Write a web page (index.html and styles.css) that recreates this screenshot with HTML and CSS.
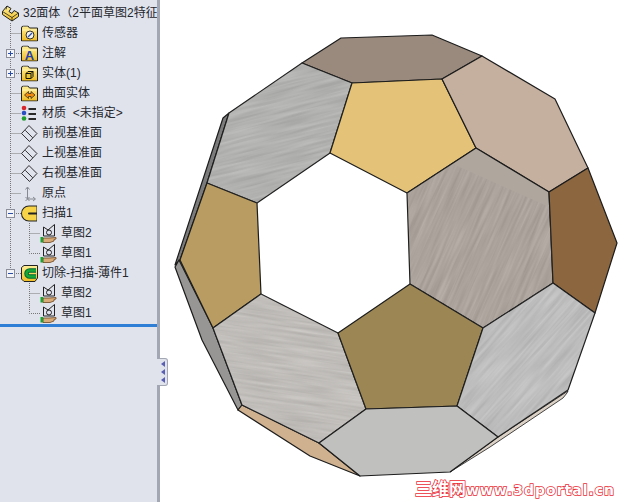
FILE: index.html
```html
<!DOCTYPE html>
<html lang="en">
<head>
    <meta charset="UTF-8">
    <meta name="viewport" content="width=device-width, initial-scale=1.0">
    <title>32面体</title>
    <link rel="stylesheet" href="styles.css">
</head>
<body>

<svg class="defs" width="0" height="0">
    <defs>
        <!-- tree connectors -->
        <symbol id="tee" viewBox="0 0 21 20"><path class="dots" d="M10.5 0V20M10.5 10.5H21"/></symbol>
        <symbol id="tee-plus" viewBox="0 0 21 20"><path class="dots" d="M10.5 0V20M14 10.5H21"/><rect class="box" x="6.5" y="6.5" width="8" height="8"/><path class="sign" d="M8 10.5H13M10.5 8V13"/></symbol>
        <symbol id="tee-minus" viewBox="0 0 21 20"><path class="dots" d="M10.5 0V20M14 10.5H21"/><rect class="box" x="6.5" y="6.5" width="8" height="8"/><path class="sign" d="M8 10.5H13"/></symbol>
        <symbol id="last-minus" viewBox="0 0 21 20"><path class="dots" d="M10.5 0V6M14 10.5H21"/><rect class="box" x="6.5" y="6.5" width="8" height="8"/><path class="sign" d="M8 10.5H13"/></symbol>
        <symbol id="sub-tee" viewBox="0 0 40 20"><path class="dots" d="M10.5 0V20M29.5 0V20M29.5 10.5H40"/></symbol>
        <symbol id="sub-last" viewBox="0 0 40 20"><path class="dots" d="M10.5 0V20M29.5 0V10.5H40"/></symbol>
        <symbol id="end-tee" viewBox="0 0 40 20"><path class="dots" d="M29.5 0V20M29.5 10.5H40"/></symbol>
        <symbol id="end-last" viewBox="0 0 40 20"><path class="dots" d="M29.5 0V10.5H40"/></symbol>

        <!-- feature icons -->
        <linearGradient id="gold" x1="0" y1="0" x2="0" y2="1">
            <stop offset="0" stop-color="#fff09a"/>
            <stop offset="1" stop-color="#f0bc20"/>
        </linearGradient>
        <symbol id="part" viewBox="0 0 17 16">
            <path class="ink gold" d="M0.500 6L5 0.500L9 3L7 6L10 8L12 5L16.500 7.500V11L10 15.500L0.500 9Z"/>
            <path class="thin" d="M0.500 6L10 12V15.500M10 12L16.500 7.500M5 0.500L4 4"/>
        </symbol>
        <symbol id="folder" viewBox="0 0 17 16">
            <path class="ink gold" d="M0.500 15.500V2.500Q0.500 0.500 2.500 0.500H7L8.500 2.500H16.500V15.500Z"/>
            <path class="edge" d="M1.500 4.500H15.500"/>
        </symbol>
        <symbol id="plane" viewBox="0 0 16 16">
            <path class="plane" d="M0.500 8L7.500 0.500L15 8L8 15.500Z"/>
            <path class="plane" d="M4 5L11 12"/>
        </symbol>
        <symbol id="sketch" viewBox="0 0 17 19">
            <path class="outline" d="M3.500 3L8 6L14.500 0.500V12H3.500Z"/>
            <circle class="outline" cx="9" cy="8.500" r="2.500"/>
            <path class="hand" d="M3 14H9L16 13.500V15L14 15.500V17L10 18.500H3Z"/>
            <rect class="green" x="0.500" y="13" width="2.500" height="5.500"/>
        </symbol>
        <symbol id="sweep" viewBox="0 0 17 17">
            <path class="c-ink" d="M16 4.500H8A4 4 0 0 0 8 12.500H16"/>
            <path class="c-gold" d="M15.500 4.500H8A4 4 0 0 0 8 12.500H15.500"/>
        </symbol>

        <!-- brushed metal, used as a fill on top of the flat faces -->
        <filter id="brush" x="0" y="0" width="100%" height="100%" color-interpolation-filters="sRGB">
            <feTurbulence type="fractalNoise" baseFrequency="0.02 0.35" numOctaves="2" seed="4"/>
            <feColorMatrix type="matrix" values="1.600 0 0 0 -0.300  1.600 0 0 0 -0.300  1.600 0 0 0 -0.300  0 0 0 0 0.09"/>
        </filter>
        <pattern id="brush-flat" patternUnits="userSpaceOnUse" x="-400" y="-400" width="1300" height="1300" patternTransform="rotate(-14 400 250)">
            <rect x="-400" y="-400" width="1300" height="1300" filter="url(#brush)"/>
        </pattern>
        <pattern id="brush-low" patternUnits="userSpaceOnUse" x="-400" y="-400" width="1300" height="1300" patternTransform="rotate(8 400 250)">
            <rect x="-400" y="-400" width="1300" height="1300" filter="url(#brush)"/>
        </pattern>
        <pattern id="brush-steep" patternUnits="userSpaceOnUse" x="-400" y="-400" width="1300" height="1300" patternTransform="rotate(-66 400 250)">
            <rect x="-400" y="-400" width="1300" height="1300" filter="url(#brush)"/>
        </pattern>
        <pattern id="brush-mid" patternUnits="userSpaceOnUse" x="-400" y="-400" width="1300" height="1300" patternTransform="rotate(-48 400 250)">
            <rect x="-400" y="-400" width="1300" height="1300" filter="url(#brush)"/>
        </pattern>
    </defs>
</svg>

<div class="app">

    <div class="sidebar">
        <div class="row root">
            <svg class="icon"><use href="#part"/></svg>
            <span class="label">32面体（2平面草图2特征</span>
        </div>

        <div class="row">
            <svg class="twig"><use href="#tee"/></svg>
            <svg class="icon" viewBox="0 0 17 16">
                <use href="#folder"/>
                <circle class="dial" cx="9" cy="9.500" r="4"/>
                <path class="needle" d="M7 11.500L11 7.500"/>
            </svg>
            <span class="label">传感器</span>
        </div>
        <div class="row">
            <svg class="twig"><use href="#tee-plus"/></svg>
            <svg class="icon" viewBox="0 0 17 16">
                <use href="#folder"/>
                <text class="letter" x="8.500" y="14.500" text-anchor="middle">A</text>
            </svg>
            <span class="label">注解</span>
        </div>
        <div class="row">
            <svg class="twig"><use href="#tee-plus"/></svg>
            <svg class="icon" viewBox="0 0 17 16">
                <use href="#folder"/>
                <path class="solid" d="M5 8L7 6H12V11L10 13H5Z"/>
                <path class="solid" d="M5 8H10V13M10 8L12 6"/>
            </svg>
            <span class="label">实体(1)</span>
        </div>
        <div class="row">
            <svg class="twig"><use href="#tee"/></svg>
            <svg class="icon" viewBox="0 0 17 16">
                <use href="#folder"/>
                <path class="surface" d="M3.500 9.500L7.500 6V8H10V6L14 9.500L10 13V11H7.500V13Z"/>
            </svg>
            <span class="label">曲面实体</span>
        </div>
        <div class="row">
            <svg class="twig"><use href="#tee"/></svg>
            <svg class="icon" viewBox="0 0 17 16">
                <circle class="ball red" cx="3" cy="2.500" r="2.300"/>
                <circle class="ball blue" cx="3" cy="7.500" r="2.300"/>
                <circle class="ball grn" cx="3" cy="13" r="2.300"/>
                <path class="bars" d="M7.500 3.500H15M7.500 8.500H15M7.500 13.500H15"/>
            </svg>
            <span class="label">材质&nbsp;&nbsp;&lt;未指定&gt;</span>
        </div>
        <div class="row">
            <svg class="twig"><use href="#tee"/></svg>
            <svg class="icon"><use href="#plane"/></svg>
            <span class="label">前视基准面</span>
        </div>
        <div class="row">
            <svg class="twig"><use href="#tee"/></svg>
            <svg class="icon"><use href="#plane"/></svg>
            <span class="label">上视基准面</span>
        </div>
        <div class="row">
            <svg class="twig"><use href="#tee"/></svg>
            <svg class="icon"><use href="#plane"/></svg>
            <span class="label">右视基准面</span>
        </div>
        <div class="row">
            <svg class="twig"><use href="#tee"/></svg>
            <svg class="icon" viewBox="0 0 17 16">
                <path class="axis" d="M6.500 2V13.500H14M4.500 4L6.500 1.500L8.500 4M12 11.500L14.500 13.500L12 15.500M4.500 11.500L8.500 15.500M8.500 11.500L4.500 15.500"/>
            </svg>
            <span class="label">原点</span>
        </div>
        <div class="row">
            <svg class="twig"><use href="#tee-minus"/></svg>
            <svg class="icon"><use href="#sweep"/></svg>
            <span class="label">扫描1</span>
        </div>
        <div class="row">
            <svg class="twig wide"><use href="#sub-tee"/></svg>
            <svg class="icon tall"><use href="#sketch"/></svg>
            <span class="label">草图2</span>
        </div>
        <div class="row">
            <svg class="twig wide"><use href="#sub-last"/></svg>
            <svg class="icon tall"><use href="#sketch"/></svg>
            <span class="label">草图1</span>
        </div>
        <div class="row">
            <svg class="twig"><use href="#last-minus"/></svg>
            <svg class="icon" viewBox="0 0 17 17">
                <path class="ink gold" d="M0.500 2.500L3 0.500H16.500V13L14 16.500H3L0.500 14Z"/>
                <path class="cut-ink" d="M15 5.500H8.500A3 3 0 0 0 8.500 11.500H15"/>
                <path class="cut-green" d="M15 5.500H8.500A3 3 0 0 0 8.500 11.500H15"/>
            </svg>
            <span class="label">切除-扫描-薄件1</span>
        </div>
        <div class="row">
            <svg class="twig wide"><use href="#end-tee"/></svg>
            <svg class="icon tall"><use href="#sketch"/></svg>
            <span class="label">草图2</span>
        </div>
        <div class="row">
            <svg class="twig wide"><use href="#end-last"/></svg>
            <svg class="icon tall"><use href="#sketch"/></svg>
            <span class="label">草图1</span>
        </div>

        <div class="rule"></div>
    </div>

    <div class="collapse">
        <span class="arrow"></span>
        <span class="arrow"></span>
        <span class="arrow"></span>
    </div>

    <div class="view">
        <svg class="model" viewBox="160 0 475 502" width="475" height="502">
            <!-- thin side walls behind the faces -->
            <polygon class="face wall-dark" points="229,113 223,118 175,265 180,260 207,183"/>
            <polygon class="face wall-grey" points="175,267 179,260 213,328 242,405 238,410 202,340"/>
            <polygon class="face wall-tan" points="242,405 319,443 360,476 310,456 238,410"/>
            <polygon class="face wall-light" points="450,472 498,437 568,391 567,393 563,398 490,447"/>

            <polygon class="face c-top" points="341,38 432,35 482,56 442,79 352,83 302,63"/>
            <polygon class="face c-grey" points="302,63 352,83 330,153 257,203 207,183 229,113"/>
            <polygon class="face c-yellow" points="352,83 442,79 476,148 407,193 330,153"/>
            <polygon class="face c-beige" points="482,56 555,99 588,168 549,192 476,148 442,79"/>
            <polygon class="face c-centre" points="476,148 549,192 553,283 483,328 410,284 407,193"/>
            <polygon class="face c-brown" points="588,168 617,243 595,313 553,283 549,192"/>
            <polygon class="face c-tan" points="207,183 257,203 261,294 213,328 180,260"/>
            <polygon class="face c-pale" points="213,328 261,294 338,333 366,409 319,443 242,405"/>
            <polygon class="face c-olive" points="338,333 410,284 483,328 457,406 366,409"/>
            <polygon class="face c-silver" points="483,328 553,283 595,313 568,390 498,437 457,406"/>
            <polygon class="face c-bottom" points="366,409 457,406 498,437 450,472 360,476 319,443"/>

            <!-- brushed overlays -->
            <polygon class="sheen s-flat" points="302,63 352,83 330,153 257,203 207,183 229,113"/>
            <polygon class="sheen s-steep soft" points="482,56 555,99 588,168 549,192 476,148 442,79"/>
            <polygon class="sheen s-steep" points="476,148 549,192 553,283 483,328 410,284 407,193"/>
            <polygon class="sheen s-low" points="213,328 261,294 338,333 366,409 319,443 242,405"/>
            <polygon class="sheen s-mid" points="483,328 553,283 595,313 568,390 498,437 457,406"/>
        </svg>

        <div class="mark"><span class="mark-cn">三维网</span>www.3dportal.cn</div>
    </div>

</div>

</body>
</html>
```

FILE: styles.css
```css
*{
    margin: 0px;
    padding: 0px;
    box-sizing: border-box;
}
body{
    background: #fff;
    overflow: hidden;
    font-family: "Liberation Sans", "Noto Sans CJK SC", sans-serif;
}
.defs{
    position: absolute;
}
.app{
    position: relative;
    display: flex;
    width: 635px;
    height: 502px;
}

/* feature tree */
.sidebar{
    width: 160px;
    flex-shrink: 0;
    padding-top: 3px;
    background: #e0e3ec;
    border-right: 3px solid #a3a6b3;
}
.row{
    display: flex;
    align-items: center;
    height: 20px;
}
.root{
    padding-left: 2px;
}
.twig{
    width: 21px;
    height: 20px;
    flex-shrink: 0;
}
.twig.wide{
    width: 40px;
}
.icon{
    width: 17px;
    height: 17px;
    flex-shrink: 0;
    margin-right: 4px;
    overflow: visible;
}
.icon.tall{
    height: 19px;
}
.label{
    font-size: 12px;
    line-height: 20px;
    color: #25272e;
    white-space: nowrap;
    overflow: hidden;
}
.rule{
    height: 3px;
    margin-top: 1px;
    background: #2f7fd6;
}

/* connector parts */
.dots{
    fill: none;
    stroke: #777;
    stroke-width: 1;
    stroke-dasharray: 1 1;
}
.box{
    fill: #f3f4f8;
    stroke: #8c8f99;
}
.sign{
    fill: none;
    stroke: #2b4fa8;
}

/* icon parts */
.ink{
    stroke: #222;
    stroke-width: 1;
    stroke-linejoin: round;
}
.gold{
    fill: url(#gold);
}
.thin{
    fill: none;
    stroke: #222;
    stroke-width: 0.8;
}
.edge{
    fill: none;
    stroke: #fff6b8;
}
.dial{
    fill: #f4f2e4;
    stroke: #333;
}
.needle{
    fill: none;
    stroke: #2b4fa8;
    stroke-width: 1.2;
}
.letter{
    font-family: "Liberation Sans", sans-serif;
    font-size: 13px;
    font-weight: bold;
    fill: #2340b0;
}
.solid{
    fill: #e8c63c;
    stroke: #111;
}
.surface{
    fill: #f08c10;
    stroke: #222;
    stroke-width: 0.7;
}
.ball{
    stroke: none;
}
.red{ fill: #d8262c; }
.blue{ fill: #2a4fc0; }
.grn{ fill: #1f9e2e; }
.bars{
    fill: none;
    stroke: #2a2a2a;
    stroke-width: 2;
}
.plane{
    fill: none;
    stroke: #111;
    stroke-width: 0.8;
}
.axis{
    fill: none;
    stroke: #868990;
    stroke-width: 1;
}
.c-ink{
    fill: none;
    stroke: #222;
    stroke-width: 8;
}
.c-gold{
    fill: none;
    stroke: #f6d347;
    stroke-width: 6;
}
.cut-ink{
    fill: none;
    stroke: #063;
    stroke-width: 4.5;
}
.cut-green{
    fill: none;
    stroke: #18a838;
    stroke-width: 2.5;
}
.outline{
    fill: none;
    stroke: #222;
    stroke-width: 1;
}
.hand{
    fill: #d9ab78;
    stroke: #6b4520;
    stroke-width: 0.8;
}
.green{
    fill: #12a530;
}

/* little tab on the sash */
.collapse{
    position: absolute;
    left: 157px;
    top: 358px;
    width: 11px;
    height: 28px;
    display: flex;
    flex-direction: column;
    align-items: flex-end;
    justify-content: center;
    gap: 2px;
    padding-right: 2px;
    background: #e0e3ec;
    border: 1px solid #a3a6b3;
    border-left: 0;
    border-radius: 0 3px 3px 0;
}
.arrow{
    width: 0;
    height: 0;
    border-top: 3px solid transparent;
    border-bottom: 3px solid transparent;
    border-right: 4px solid #5a5fb4;
}

/* model view */
.view{
    position: relative;
    flex: 1;
}
.model{
    display: block;
}
.face{
    stroke: #1c1c1c;
    stroke-width: 1.2;
    stroke-linejoin: round;
}
.wall-dark{ fill: #7b7b7b; }
.wall-grey{ fill: #989694; }
.wall-tan{ fill: #cfb08f; }
.wall-light{ fill: #ddd2c6; stroke-width: 0.8; }
.c-top{ fill: #9a8a7e; }
.c-grey{ fill: #b6b6b4; }
.c-yellow{ fill: #e4c277; }
.c-beige{ fill: #c5af9e; }
.c-centre{ fill: #afa69e; }
.c-brown{ fill: #8b663f; }
.c-tan{ fill: #b89c62; }
.c-pale{ fill: #c6c3bf; }
.c-olive{ fill: #9c8754; }
.c-silver{ fill: #c3c3c3; }
.c-bottom{ fill: #c0c0be; }
.sheen{
    stroke: none;
}
.soft{
    opacity: 0.5;
}
.s-flat{ fill: url(#brush-flat); }
.s-low{ fill: url(#brush-low); }
.s-steep{ fill: url(#brush-steep); }
.s-mid{ fill: url(#brush-mid); }

/* watermark over the picture */
.mark{
    position: absolute;
    left: 255px;
    top: 481px;
    font-family: "DejaVu Sans", "Noto Sans CJK SC", sans-serif;
    font-size: 14px;
    font-weight: bold;
    line-height: 16px;
    letter-spacing: 1px;
    white-space: nowrap;
    color: #fff;
    -webkit-text-stroke: 1.5px #ea2a34;
    paint-order: stroke fill;
}
.mark-cn{
    font-size: 17px;
    letter-spacing: 0;
}
```
